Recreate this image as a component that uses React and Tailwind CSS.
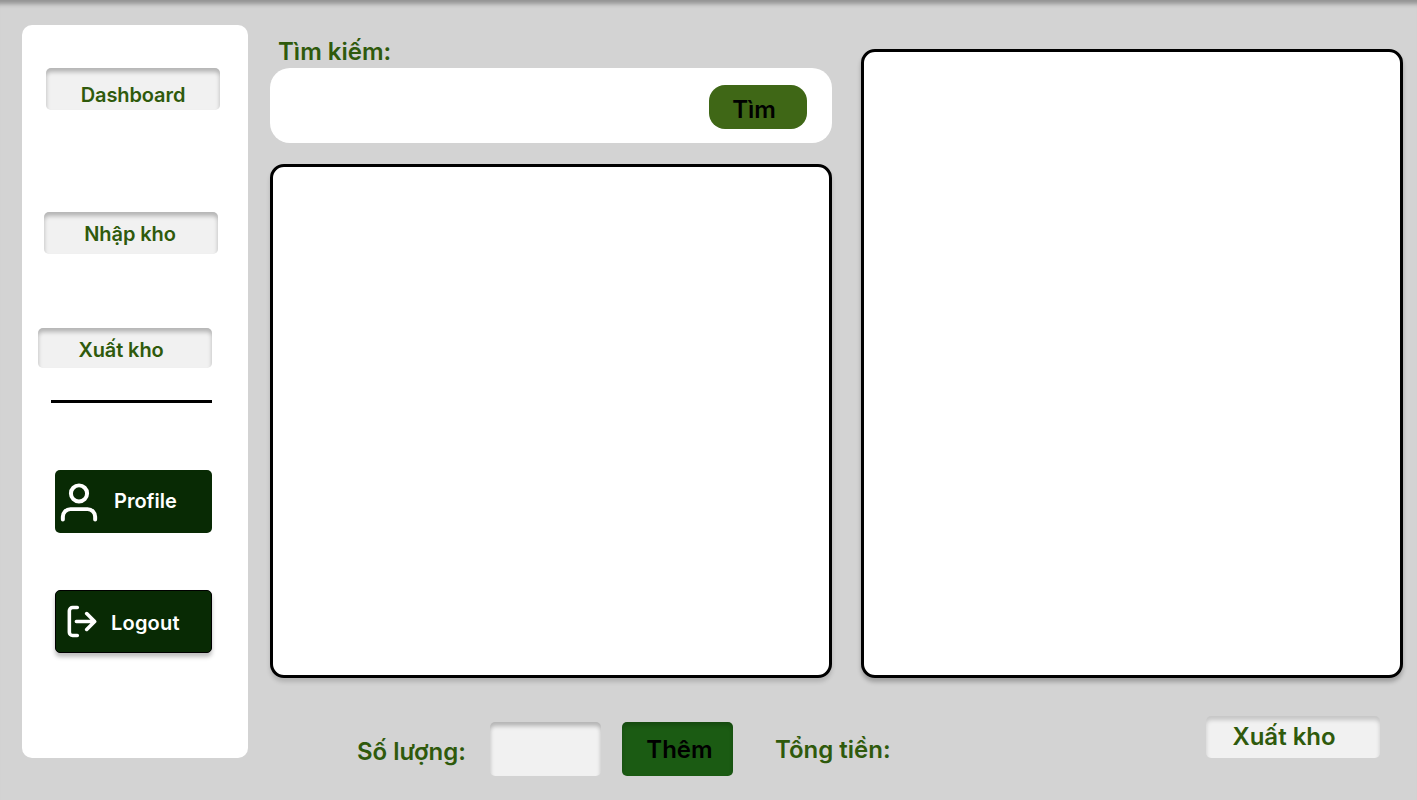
const green = "text-[#2f5a0c]";
const inset = "shadow-[inset_0_4px_4px_rgba(0,0,0,0.25)]";

function NavButton({ label, className }) {
  return (
    <div className={`w-[174px] rounded-[5px] bg-[#f1f1f1] ${inset} flex items-center justify-center font-semibold tracking-[-0.1px] text-[20px] ${green} ${className}`}>
      <span>{label}</span>
    </div>
  );
}

function UserIcon() {
  return (
    <svg width="38" height="40" viewBox="0 0 40 42" fill="none" stroke="white" strokeWidth="4.2" strokeLinecap="round" strokeLinejoin="round">
      <circle cx="20" cy="12" r="8.5" />
      <path d="M3 39.5v-3a8 8 0 0 1 8-8h18a8 8 0 0 1 8 8v3" />
    </svg>
  );
}

function LogoutIcon() {
  return (
    <svg width="30" height="33" viewBox="0 0 32 34" fill="none" stroke="white" strokeWidth="3.8" strokeLinecap="round" strokeLinejoin="round">
      <path d="M11 2H6a3.5 3.5 0 0 0-3.5 3.5v23A3.5 3.5 0 0 0 6 32h5" />
      <path d="M10 17h19M21 8.5l8.5 8.5L21 25.5" />
    </svg>
  );
}

export default function App() {
  return (
    <div
      className="relative w-[1417px] h-[800px] overflow-hidden bg-[#d3d3d3] shadow-[inset_0_8px_4px_-4px_rgba(0,0,0,0.3)]"
      style={{ fontFamily: "Inter, 'Noto Sans', sans-serif" }}
    >
      <div className="flex pl-[22px] pt-[25px]">
        <aside className="w-[226px] h-[733px] shrink-0 rounded-[10px] bg-white flex flex-col">
          <NavButton label="Dashboard" className="mt-[43px] ml-[24px] h-[42px] pt-[12px]" />
          <NavButton label="Nhập kho" className="mt-[102px] ml-[22px] h-[42px] pt-[2px] pr-[2px]" />
          <NavButton label="Xuất kho" className="mt-[74px] ml-[16px] h-[40px] pt-[4px] pr-[8px]" />
          <div className="mt-[32px] ml-[29px] w-[161px] h-[3px] bg-black" />
          <div className="mt-[67px] ml-[33px] w-[157px] h-[63px] rounded-[5px] bg-[#082a04] flex items-center pl-[5px] gap-[16px] text-white font-semibold text-[20px]">
            <UserIcon />
            <span className="-mt-[1px]">Profile</span>
          </div>
          <div className="mt-[57px] ml-[33px] w-[157px] h-[63px] rounded-[5px] bg-[#082a04] flex items-center pl-[11px] gap-[14px] text-white font-semibold text-[20px] tracking-[0.2px] border border-black shadow-[0_4px_4px_rgba(0,0,0,0.25)]">
            <LogoutIcon />
            <span className="mt-[2px]">Logout</span>
          </div>
        </aside>

        <main className="ml-[22px] w-[1133px] flex flex-col">
          <div className="flex">
            <div className="w-[562px] shrink-0">
              <div className={`ml-[8px] mt-[11px] h-[32px] text-[24px] leading-[32px] font-semibold ${green}`}>Tìm kiếm:</div>
              <div className="h-[75px] rounded-[20px] bg-white flex items-center justify-end pr-[25px]">
                <div className="mt-[2px] w-[98px] h-[44px] rounded-[16px] bg-[#3f6716] flex items-center justify-center text-[24px] font-semibold text-black pr-[8px] pt-[6px]">
                  Tìm
                </div>
              </div>
              <div className="mt-[21px] h-[514px] rounded-[14px] border-[3px] border-black bg-white shadow-[0_4px_4px_rgba(0,0,0,0.15)]" />
            </div>
            <div className="ml-[29px] mt-[24px] w-[542px] h-[629px] rounded-[14px] border-[3px] border-black bg-white shadow-[0_4px_4px_rgba(0,0,0,0.25)]" />
          </div>

          <div className="flex mt-[38px] items-start">
            <span className={`ml-[87px] mt-[21px] w-[110px] text-[24px] leading-[30px] font-semibold whitespace-nowrap ${green}`}>Số lượng:</span>
            <div className={`ml-[23px] mt-[6px] w-[111px] h-[54px] rounded-[5px] bg-[#f1f1f1] ${inset}`} />
            <div className="ml-[21px] mt-[6px] w-[111px] h-[54px] rounded-[5px] bg-[#1b5b13] shadow-[inset_0_3px_4px_rgba(0,0,0,0.2)] flex items-center justify-center text-[24px] font-semibold text-black pt-[2px] pl-[4px]">
              Thêm
            </div>
            <span className={`ml-[42px] mt-[19px] w-[114px] text-[24px] leading-[30px] font-semibold whitespace-nowrap ${green}`}>Tổng tiền:</span>
            <div className={`ml-[317px] w-[174px] h-[42px] rounded-[5px] bg-[#f1f1f1] shadow-[inset_0_4px_4px_rgba(0,0,0,0.18)] flex items-center justify-center text-[24px] font-semibold ${green} pr-[18px]`}>
              Xuất kho
            </div>
          </div>
        </main>
      </div>
    </div>
  );
}
